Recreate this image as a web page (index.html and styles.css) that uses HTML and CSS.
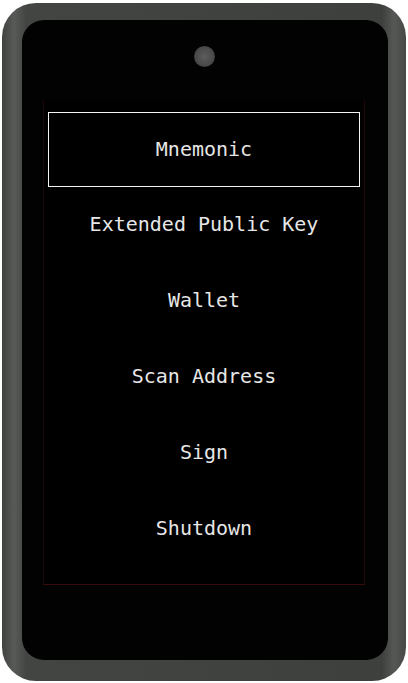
FILE: index.html
```html
<!DOCTYPE html>
<html>
<head>
<meta charset="utf-8">
<link rel="stylesheet" href="styles.css">
</head>
<body>
<div class="device">
  <div class="bezel">
    <div class="camera"></div>
    <div class="screen">
      <ul class="menu">
        <li class="item selected">Mnemonic</li>
        <li class="item">Extended Public Key</li>
        <li class="item">Wallet</li>
        <li class="item">Scan Address</li>
        <li class="item">Sign</li>
        <li class="item">Shutdown</li>
      </ul>
    </div>
  </div>
</div>
</body>
</html>
```
FILE: styles.css
```css
html, body {
  margin: 0;
  padding: 0;
  background: #ffffff;
}
.device {
  box-sizing: border-box;
  margin: 3px 0 0 2px;
  width: 404px;
  height: 678px;
  border-radius: 34px;
  background: linear-gradient(90deg, #404240 0%, #585a58 3%, #434543 6%, #3e403e 94%, #565856 97%, #464846 100%);
  padding: 17px 18px 21px 20px;
}
.bezel {
  box-sizing: border-box;
  height: 100%;
  background: #020202;
  border-radius: 22px;
  display: flex;
  flex-direction: column;
}
.camera {
  align-self: center;
  width: 21px;
  height: 21px;
  margin-top: 26px;
  margin-left: -2px;
  border-radius: 50%;
  background: radial-gradient(circle at 50% 50%, #5c5c5c 0%, #4a4a4a 60%, #2a2a2a 100%);
}
.screen {
  box-sizing: border-box;
  margin-top: 33px;
  margin-left: 21px;
  width: 322px;
  background: #000;
  border-left: 1px solid #1a0606;
  border-right: 1px solid #200606;
  border-bottom: 1px solid #3a0a0a;
  padding: 11px 0 17px 4px;
}
.menu {
  list-style: none;
  margin: 0;
  padding: 0;
  display: flex;
  flex-direction: column;
}
.item {
  box-sizing: border-box;
  width: 312px;
  height: 76px;
  display: flex;
  align-items: center;
  justify-content: center;
  font-family: "DejaVu Sans Mono", "Liberation Mono", monospace;
  font-size: 20px;
  color: #e6e6e6;
  border: 1px solid transparent;
  padding-bottom: 2px;
}
.item.selected {
  border-color: #f4f4f4;
  height: 75px;
  margin: 1px 0 0;
}
```
